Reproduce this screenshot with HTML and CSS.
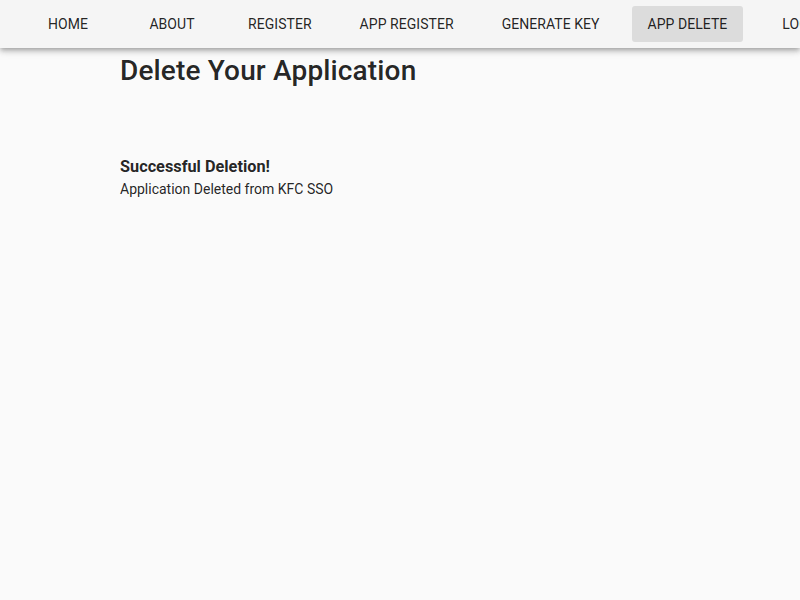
FILE: index.html
```html
<!DOCTYPE html>
<html>
<head>
<meta charset="utf-8">
<link rel="stylesheet" href="styles.css">
</head>
<body>
<nav class="toolbar">
  <a class="nav-btn">HOME</a>
  <a class="nav-btn">ABOUT</a>
  <a class="nav-btn">REGISTER</a>
  <a class="nav-btn">APP REGISTER</a>
  <a class="nav-btn">GENERATE KEY</a>
  <a class="nav-btn active">APP DELETE</a>
  <a class="nav-btn wide">LOGOUT</a>
</nav>
<main class="content">
  <h1 class="title">Delete Your Application</h1>
  <section class="result">
    <h2 class="result-title">Successful Deletion!</h2>
    <p class="result-text">Application Deleted from KFC SSO</p>
  </section>
</main>
</body>
</html>
```
FILE: styles.css
```css
html, body {
  margin: 0;
  padding: 0;
  background: #fafafa;
  font-family: Roboto, "Liberation Sans", sans-serif;
  color: rgba(0,0,0,0.87);
  overflow: hidden;
}
.toolbar {
  display: flex;
  align-items: center;
  gap: 16px;
  height: 48px;
  padding: 0 24px;
  background: #f5f5f5;
  box-shadow: 0 2px 4px -1px rgba(0,0,0,.2), 0 4px 5px 0 rgba(0,0,0,.14), 0 1px 10px 0 rgba(0,0,0,.12);
  white-space: nowrap;
  position: relative;
  z-index: 1;
}
.nav-btn {
  flex: none;
  box-sizing: border-box;
  min-width: 88px;
  height: 36px;
  line-height: 36px;
  padding: 0 16px;
  text-align: center;
  font-size: 14px;
  font-weight: 400;
  letter-spacing: 0.05px;
  border-radius: 3px;
  color: rgba(0,0,0,0.87);
}
.nav-btn.wide {
  padding-left: 23px;
}
.nav-btn.active {
  background: #dcdcdc;
}
.content {
  padding: 0 120px;
}
.title {
  margin: 0;
  padding-top: 7px;
  font-size: 28px;
  line-height: 32px;
  font-weight: 500;
  letter-spacing: 0.15px;
}
.result {
  padding-top: 68px;
}
.result-title {
  margin: 0;
  font-size: 16.3px;
  line-height: 24px;
  font-weight: 700;
}
.result-text {
  margin: 0;
  font-size: 14px;
  line-height: 20px;
  font-weight: 400;
}
```
